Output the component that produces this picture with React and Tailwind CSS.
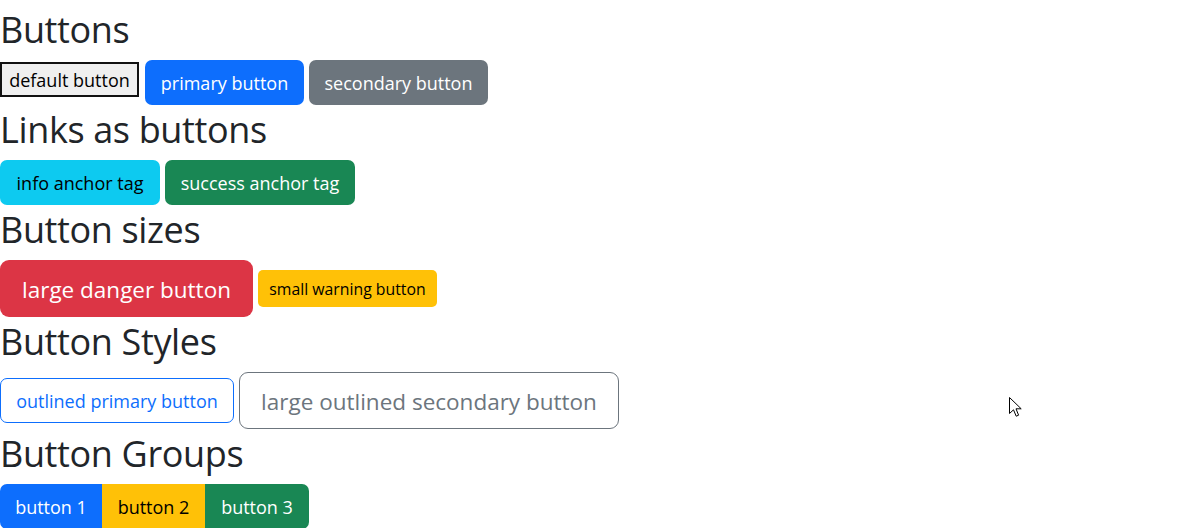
import React from "react";

const font = { fontFamily: '"Open Sans", "Noto Sans", sans-serif' };

function H({ children }) {
  return (
    <h2 className="text-[36px] leading-[50px] h-[46px] mb-[9px] font-normal tracking-[-0.01em] text-[#212529] whitespace-nowrap">
      {children}
    </h2>
  );
}

export default function App() {
  return (
    <div
      className="relative w-[1188px] h-[528px] overflow-hidden bg-white pt-[5px] text-[#212529]"
      style={font}
    >
      <H>Buttons</H>
      <div className="flex items-start h-[45px]">
        <button className="mt-[2px] h-[35px] w-[139px] pt-[1px] bg-[#efefef] border-2 border-[#111] text-[18px] text-black flex items-center justify-center">
          default button
        </button>
        <button className="ml-[6px] h-[45px] w-[159px] pt-[2px] rounded-[7px] bg-[#0d6efd] text-white text-[18px] flex items-center justify-center">
          primary button
        </button>
        <button className="ml-[5px] h-[45px] w-[179px] pt-[2px] rounded-[7px] bg-[#6c757d] text-white text-[18px] flex items-center justify-center">
          secondary button
        </button>
      </div>

      <H>Links as buttons</H>
      <div className="flex items-start h-[45px]">
        <a className="h-[45px] w-[160px] pt-[2px] rounded-[7px] bg-[#0dcaf0] text-black text-[18px] flex items-center justify-center">
          info anchor tag
        </a>
        <a className="ml-[5px] h-[45px] w-[190px] pt-[2px] rounded-[7px] bg-[#198754] text-white text-[18px] flex items-center justify-center">
          success anchor tag
        </a>
      </div>

      <H>Button sizes</H>
      <div className="flex items-center h-[57px]">
        <button className="h-[57px] w-[253px] pt-[2px] rounded-[9px] bg-[#dc3545] text-white text-[22.5px] flex items-center justify-center">
          large danger button
        </button>
        <button className="ml-[5px] h-[37px] w-[179px] pt-[2px] rounded-[5px] bg-[#ffc107] text-black text-[15.8px] flex items-center justify-center">
          small warning button
        </button>
      </div>

      <H>Button Styles</H>
      <div className="flex items-center h-[57px]">
        <button className="h-[45px] w-[234px] pt-[2px] rounded-[7px] border border-[#0d6efd] bg-white text-[#0d6efd] text-[18px] flex items-center justify-center">
          outlined primary button
        </button>
        <button className="ml-[5px] h-[57px] w-[380px] pt-[2px] rounded-[9px] border border-[#6c757d] bg-white text-[#6c757d] text-[22.5px] flex items-center justify-center">
          large outlined secondary button
        </button>
      </div>

      <H>Button Groups</H>
      <div className="flex items-start h-[45px]">
        <button className="h-[45px] w-[102px] pt-[2px] rounded-l-[7px] bg-[#0d6efd] text-white text-[18px] flex items-center justify-center">
          button 1
        </button>
        <button className="h-[45px] w-[103px] pt-[2px] bg-[#ffc107] text-black text-[18px] flex items-center justify-center">
          button 2
        </button>
        <button className="h-[45px] w-[104px] pt-[2px] rounded-r-[7px] bg-[#198754] text-white text-[18px] flex items-center justify-center">
          button 3
        </button>
      </div>

      <svg
        className="absolute left-[1009px] top-[397px]"
        width="14"
        height="21"
        viewBox="0 0 14 21"
      >
        <path
          d="M0.5 0.5 L0.5 16.5 L4.5 12.8 L7.2 19.2 L9.6 18.2 L7 11.8 L12.2 11.8 Z"
          fill="#fff"
          stroke="#000"
          strokeWidth="1"
          strokeLinejoin="miter"
        />
      </svg>
    </div>
  );
}
